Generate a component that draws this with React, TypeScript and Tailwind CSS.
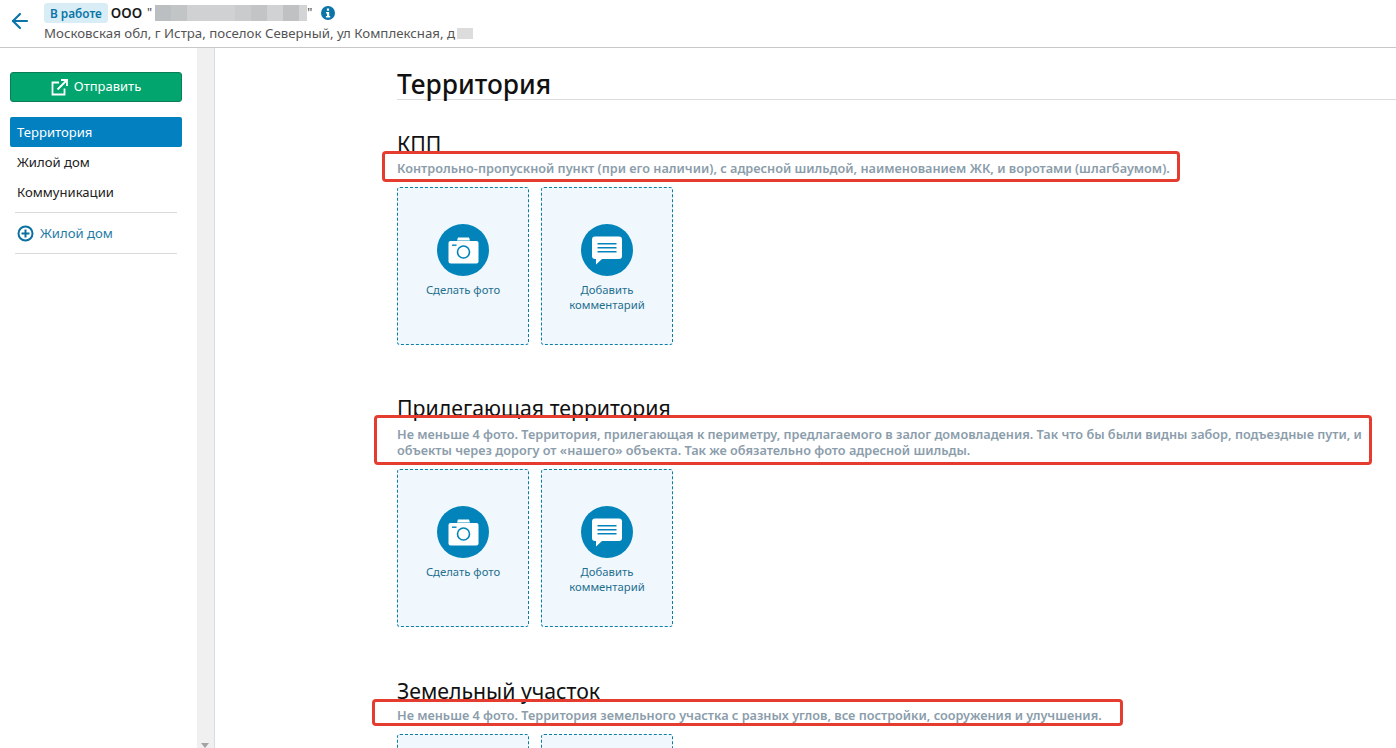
import { ArrowLeft } from "lucide-react";

const CameraIcon = () => (
  <svg width="31" height="27" viewBox="0 0 31 27" fill="none">
    <path d="M9 3.5 L10 0.5 H21 L22 3.5 Z" fill="#fff" />
    <rect x="0.5" y="4" width="30" height="22.5" rx="2" fill="#fff" />
    <circle cx="15.5" cy="15" r="6" stroke="#0284bb" strokeWidth="1.6" />
    <rect x="4" y="7.5" width="4.5" height="1.4" fill="#0284bb" />
  </svg>
);

const CommentIcon = () => (
  <svg width="30" height="29" viewBox="0 0 30 29" fill="none">
    <path
      d="M3 0.5 H27 a3 3 0 0 1 3 3 V20 a3 3 0 0 1 -3 3 H10 L4 28.5 V23 H3 a3 3 0 0 1 -3 -3 V3.5 a3 3 0 0 1 3 -3 Z"
      fill="#fff"
    />
    <rect x="5.5" y="7" width="19" height="1.5" fill="#0284bb" />
    <rect x="5.5" y="11" width="19" height="1.5" fill="#0284bb" />
    <rect x="5.5" y="15" width="19" height="1.5" fill="#0284bb" />
  </svg>
);

const ActionCard = ({ kind }: { kind: "photo" | "comment" }) => (
  <div className="w-[132px] h-[158px] shrink-0 border border-dashed border-[#0b7ea8] rounded-[3px] bg-[#f0f8fd] flex flex-col items-center pt-[36px]">
    <div className="w-[52px] h-[52px] rounded-full bg-[#0284bb] flex items-center justify-center">
      {kind === "photo" ? <CameraIcon /> : <CommentIcon />}
    </div>
    <div className="mt-[6px] text-[11.3px] leading-[15px] text-[#1f6f8f] text-center">
      {kind === "photo" ? (
        "Сделать фото"
      ) : (
        <>
          Добавить
          <br />
          комментарий
        </>
      )}
    </div>
  </div>
);

type SectionProps = {
  title: string;
  text: React.ReactNode;
  titleClass: string;
  textClass: string;
  box: string;
};

const Section = ({ title, text, titleClass, textClass, box }: SectionProps) => (
  <section>
    <h2 className={`text-[21.25px] leading-[30px] text-[#111] ${titleClass}`}>{title}</h2>
    <div className={`relative text-[12.7px] leading-[16px] font-semibold text-[#8b9dab] ${textClass}`}>
      {text}
      <div className={`absolute border-[3px] border-[#e53c30] rounded-[4px] ${box}`} />
    </div>
    <div className="flex gap-3 mt-[11px]">
      <ActionCard kind="photo" />
      <ActionCard kind="comment" />
    </div>
  </section>
);

const App = () => {
  return (
    <div className="h-[748px] w-[1396px] overflow-hidden flex flex-col bg-white font-['Noto_Sans','Open_Sans',sans-serif] text-[#222]">
      <header className="h-[48px] shrink-0 border-b border-[#c8c8c8] flex items-start">
        <div className="w-[44px] shrink-0 pt-[9px] pl-[8px]">
          <ArrowLeft size={24} strokeWidth={2.2} className="text-[#0b75a8]" />
        </div>
        <div className="pt-[3px]">
          <div className="flex items-center h-[20px]">
            <span className="h-[20px] px-[6px] rounded-[3px] bg-[#d9edf7] text-[#0b75a8] text-[11.8px] font-semibold leading-[20px]">
              В работе
            </span>
            <span className="ml-[3px] text-[13.5px] font-semibold text-[#1a1a1a]">ООО</span>
            <span className="ml-[5px] text-[12.5px] text-[#444]">"</span>
            <span className="ml-[3px] w-[152px] h-[16px] flex">
              <span className="w-[16px] bg-[#bcbfc1]" />
              <span className="w-[16px] bg-[#c2c5c6]" />
              <span className="w-[48px] bg-[#cfd1d2]" />
              <span className="w-[16px] bg-[#c9cbcc]" />
              <span className="w-[16px] bg-[#c2c4c5]" />
              <span className="w-[16px] bg-[#d0d2d3]" />
              <span className="w-[16px] bg-[#bfc1c3]" />
              <span className="w-[8px] bg-[#d2d4d5]" />
            </span>
            <span className="text-[12.5px] text-[#444]">"</span>
            <svg className="ml-[9px]" width="14" height="14" viewBox="0 0 14 14">
              <circle cx="7" cy="7" r="7" fill="#0b75a8" />
              <rect x="5.9" y="2.5" width="2.2" height="2.2" fill="#fff" />
              <path d="M5 6 H8.2 V10 H9.2 V11.4 H4.9 V10 H6 V7.4 H5 Z" fill="#fff" />
            </svg>
          </div>
          <div className="flex items-center text-[13.25px] leading-[16px] text-[#555] mt-[2px]">
            Московская обл, г Истра, поселок Северный, ул Комплексная, д
            <span className="ml-[2px] w-[16px] h-[11px] bg-[#dcdcdc]" />
          </div>
        </div>
      </header>

      <div className="flex flex-1 min-h-0">
        <aside className="w-[197px] shrink-0 pt-[24px] pl-[10px] pr-[15px]">
          <button className="w-[172px] h-[30px] rounded-[3px] bg-[#03a56f] border border-[#0a7d55] flex items-center justify-center gap-[6px] text-white text-[13px]">
            <svg width="17" height="17" viewBox="0 0 17 17" fill="none" stroke="#fff" strokeWidth="1.8">
              <path d="M8 3.5 H1.5 V15.5 H13.5 V9.5" />
              <path d="M6.5 10.5 L15.5 1.5 M10 1 H16 V7" />
            </svg>
            Отправить
          </button>
          <nav className="mt-[15px] text-[13.1px]">
            <div className="w-[172px] h-[30px] rounded-[2px] bg-[#0280bf] text-white flex items-center pl-[7px] pt-[1px]">
              Территория
            </div>
            <div className="h-[30px] flex items-center pl-[7px] pt-[1px] text-[#222]">Жилой дом</div>
            <div className="h-[30px] flex items-center pl-[7px] pt-[1px] text-[#222]">Коммуникации</div>
            <div className="ml-[5px] w-[162px] border-t border-[#d8dadc] mt-[5px]" />
            <div className="ml-[5px] w-[162px] h-[41px] flex items-center gap-[6px] border-b border-[#d8dadc] pl-[2px] pt-[1px] text-[#1f7ca8]">
              <svg width="17" height="17" viewBox="0 0 17 17" fill="none" stroke="#0b6f9f" strokeWidth="2">
                <circle cx="8.5" cy="8.5" r="7" />
                <path d="M8.5 4.5 V12.5 M4.5 8.5 H12.5" />
              </svg>
              Жилой дом
            </div>
          </nav>
        </aside>

        <div className="w-[17px] shrink-0 bg-[#f0f0f0] relative">
          <div className="absolute bottom-[0px] left-[4px] w-0 h-0 border-x-[4px] border-x-transparent border-t-[5px] border-t-[#a3a3a3]" />
        </div>

        <main className="flex-1 min-w-0 border-l border-[#cfe0ea] pl-[182px] overflow-hidden">
          <h1 className="mt-[18px] h-[34px] border-b border-[#dcdcdc] text-[26.3px] leading-[36px] font-medium text-[#111]">
            Территория
          </h1>
          <Section
            title="КПП"
            titleClass="mt-[29px]"
            textClass="mt-[1px]"
            box="left-[-15px] top-[-9px] w-[798px] h-[31px]"
            text="Контрольно-пропускной пункт (при его наличии), с адресной шильдой, наименованием ЖК, и воротами (шлагбаумом)."
          />
          <Section
            title="Прилегающая территория"
            titleClass="mt-[48px]"
            textClass="mt-[3px]"
            box="left-[-23px] top-[-11px] w-[998px] h-[50px]"
            text={
              <>
                Не меньше 4 фото. Территория, прилегающая к периметру, предлагаемого в залог домовладения. Так что бы были видны забор, подъездные пути, и
                <br />
                объекты через дорогу от «нашего» объекта. Так же обязательно фото адресной шильды.
              </>
            }
          />
          <Section
            title="Земельный участок"
            titleClass="mt-[49px]"
            textClass="mt-[1px]"
            box="left-[-25px] top-[-8px] w-[751px] h-[27px]"
            text="Не меньше 4 фото. Территория земельного участка с разных углов, все постройки, сооружения и улучшения."
          />
        </main>
      </div>
    </div>
  );
};

export default App;
